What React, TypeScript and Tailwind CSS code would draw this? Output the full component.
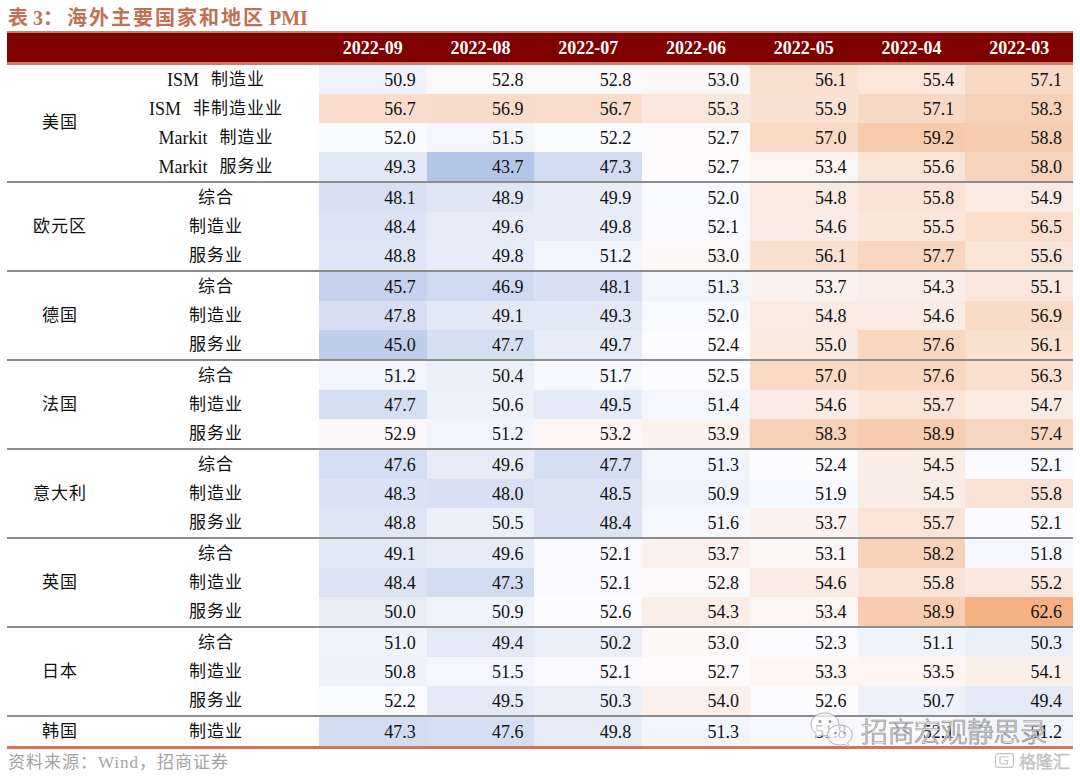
import React from 'react'

type Row = { label: React.ReactNode; values: number[] }
type Group = { country: string; rows: Row[] }

const months = ['2022-09', '2022-08', '2022-07', '2022-06', '2022-05', '2022-04', '2022-03']

const Latin = ({ t, children }: { t: string; children: React.ReactNode }) => (
    <span className="flex items-center">
        <span className="text-[18px]">{t}</span>
        <span className="ml-[12px] tracking-[1px]">{children}</span>
    </span>
)

const groups: Group[] = [
    {
        country: '美国',
        rows: [
            { label: <Latin t="ISM">制造业</Latin>, values: [50.9, 52.8, 52.8, 53.0, 56.1, 55.4, 57.1] },
            { label: <Latin t="ISM">非制造业业</Latin>, values: [56.7, 56.9, 56.7, 55.3, 55.9, 57.1, 58.3] },
            { label: <Latin t="Markit">制造业</Latin>, values: [52.0, 51.5, 52.2, 52.7, 57.0, 59.2, 58.8] },
            { label: <Latin t="Markit">服务业</Latin>, values: [49.3, 43.7, 47.3, 52.7, 53.4, 55.6, 58.0] },
        ],
    },
    {
        country: '欧元区',
        rows: [
            { label: '综合', values: [48.1, 48.9, 49.9, 52.0, 54.8, 55.8, 54.9] },
            { label: '制造业', values: [48.4, 49.6, 49.8, 52.1, 54.6, 55.5, 56.5] },
            { label: '服务业', values: [48.8, 49.8, 51.2, 53.0, 56.1, 57.7, 55.6] },
        ],
    },
    {
        country: '德国',
        rows: [
            { label: '综合', values: [45.7, 46.9, 48.1, 51.3, 53.7, 54.3, 55.1] },
            { label: '制造业', values: [47.8, 49.1, 49.3, 52.0, 54.8, 54.6, 56.9] },
            { label: '服务业', values: [45.0, 47.7, 49.7, 52.4, 55.0, 57.6, 56.1] },
        ],
    },
    {
        country: '法国',
        rows: [
            { label: '综合', values: [51.2, 50.4, 51.7, 52.5, 57.0, 57.6, 56.3] },
            { label: '制造业', values: [47.7, 50.6, 49.5, 51.4, 54.6, 55.7, 54.7] },
            { label: '服务业', values: [52.9, 51.2, 53.2, 53.9, 58.3, 58.9, 57.4] },
        ],
    },
    {
        country: '意大利',
        rows: [
            { label: '综合', values: [47.6, 49.6, 47.7, 51.3, 52.4, 54.5, 52.1] },
            { label: '制造业', values: [48.3, 48.0, 48.5, 50.9, 51.9, 54.5, 55.8] },
            { label: '服务业', values: [48.8, 50.5, 48.4, 51.6, 53.7, 55.7, 52.1] },
        ],
    },
    {
        country: '英国',
        rows: [
            { label: '综合', values: [49.1, 49.6, 52.1, 53.7, 53.1, 58.2, 51.8] },
            { label: '制造业', values: [48.4, 47.3, 52.1, 52.8, 54.6, 55.8, 55.2] },
            { label: '服务业', values: [50.0, 50.9, 52.6, 54.3, 53.4, 58.9, 62.6] },
        ],
    },
    {
        country: '日本',
        rows: [
            { label: '综合', values: [51.0, 49.4, 50.2, 53.0, 52.3, 51.1, 50.3] },
            { label: '制造业', values: [50.8, 51.5, 52.1, 52.7, 53.3, 53.5, 54.1] },
            { label: '服务业', values: [52.2, 49.5, 50.3, 54.0, 52.6, 50.7, 49.4] },
        ],
    },
    {
        country: '韩国',
        rows: [{ label: '制造业', values: [47.3, 47.6, 49.8, 51.3, 51.8, 52.1, 51.2] }],
    },
]

// three-colour scale: min blue, median white, max orange
const LO = [180, 198, 231]
const MID = [252, 252, 255]
const HI = [244, 177, 131]
const MIN_V = 43.7
const MID_V = 52.4
const MAX_V = 62.6

function heat(v: number) {
    const to = v < MID_V ? LO : HI
    const t = v < MID_V ? (MID_V - v) / (MID_V - MIN_V) : (v - MID_V) / (MAX_V - MID_V)
    const c = MID.map((m, i) => Math.round(m + (to[i] - m) * Math.min(1, t)))
    return `rgb(${c[0]}, ${c[1]}, ${c[2]})`
}

function WeChatMark() {
    return (
        <svg width="46" height="40" viewBox="0 0 46 40" fill="rgba(255,255,255,0.75)" stroke="#b0b0b0" strokeWidth="1">
            <path d="M16 3C8 3 2 8 2 14.5c0 3.7 2 6.8 5.2 8.8L6 28l5.2-2.8c1.5.4 3 .6 4.8.6 7.8 0 14-5 14-11.3S23.8 3 16 3z" />
            <circle cx="11" cy="11.5" r="1.5" fill="#9a9a9a" stroke="none" />
            <circle cx="21" cy="11.5" r="1.5" fill="#9a9a9a" stroke="none" />
            <path d="M31 15c-7 0-12.5 4.4-12.5 10s5.5 10 12.5 10c1.4 0 2.8-.2 4-.6l4.6 2.4-1.1-4c2.8-1.8 4.6-4.6 4.6-7.8C43.5 19.4 38 15 31 15z" />
            <circle cx="26.5" cy="23" r="1.3" fill="#9a9a9a" stroke="none" />
            <circle cx="35.5" cy="23" r="1.3" fill="#9a9a9a" stroke="none" />
        </svg>
    )
}

function GelonghuiMark() {
    return (
        <svg width="19" height="15" viewBox="0 0 19 15" fill="none" stroke="#c4c4c4" strokeWidth="1.2">
            <rect x="0.6" y="0.6" width="17.8" height="13.8" rx="2.5" />
            <path d="M13.5 4H6.2a1.2 1.2 0 0 0-1.2 1.2v4.6A1.2 1.2 0 0 0 6.2 11h6.3V7.5H9.5" />
        </svg>
    )
}

export default function App() {
    return (
        <div className="relative w-[1080px] h-[779px] overflow-hidden bg-white font-['Liberation_Serif','Noto_Sans_CJK_SC',serif] text-[#111]">
            {/* Title */}
            <div className="h-[31px] pl-[8px] pt-[5px] flex items-center text-[20px] font-bold text-[#c2704f] leading-none">
                <span>表 3：</span>
                <span className="ml-[4px] tracking-[2px]">海外主要国家和地区</span>
                <span className="ml-[4px]">PMI</span>
            </div>

            <div className="ml-[7px] w-[1066px]">
                {/* Header */}
                <div className="h-[34px] flex bg-[#7f0000] border-t-2 border-b-[3px] border-[#cd7d69] text-white font-bold text-[18px] leading-none">
                    <div className="w-[312px]" />
                    {months.map((m) => (
                        <div key={m} className="flex-1 flex items-center justify-center">
                            {m}
                        </div>
                    ))}
                </div>

                {/* Body */}
                {groups.map((g, gi) => {
                    const last = gi === groups.length - 1
                    return (
                        <div
                            key={g.country}
                            className={
                                last
                                    ? 'flex border-b-[3px] border-[#d8735a]'
                                    : 'flex border-b-2 border-[#8c8c8c]'
                            }
                        >
                            <div className="w-[106px] flex items-center justify-center text-[17px] tracking-[1px]">
                                {g.country}
                            </div>
                            <div className="flex-1">
                                {g.rows.map((r, ri) => (
                                    <div key={ri} className="flex h-[29px] text-[18px] leading-none">
                                        <div className="w-[206px] flex items-center justify-center text-[17px]">
                                            {typeof r.label === 'string' ? (
                                                <span className="tracking-[1px]">{r.label}</span>
                                            ) : (
                                                r.label
                                            )}
                                        </div>
                                        {r.values.map((v, vi) => (
                                            <div
                                                key={vi}
                                                className="flex-1 flex items-center justify-end pr-[11px]"
                                                style={{ backgroundColor: heat(v) }}
                                            >
                                                {v.toFixed(1)}
                                            </div>
                                        ))}
                                    </div>
                                ))}
                            </div>
                        </div>
                    )
                })}
            </div>

            {/* Source */}
            <div className="h-[28px] pl-[8px] flex items-center text-[17px] text-[#a3a3a3] tracking-[1px]">
                资料来源：Wind，招商证券
            </div>

            {/* Watermarks */}
            <div className="absolute left-[809px] top-[710px] flex items-center">
                <WeChatMark />
                <span className="ml-[6px] font-['Noto_Sans_CJK_SC',sans-serif] font-light text-[27px] leading-none text-white/90 [-webkit-text-stroke:0.7px_#8a8a8a] tracking-[-0.5px]">
                    招商宏观静思录
                </span>
            </div>
            <div className="absolute left-[995px] top-[752px] flex items-center">
                <GelonghuiMark />
                <span className="ml-[5px] font-['Noto_Sans_CJK_SC',sans-serif] font-light text-[17px] leading-none text-white [-webkit-text-stroke:0.8px_#c4c4c4]">
                    格隆汇
                </span>
            </div>
        </div>
    )
}
